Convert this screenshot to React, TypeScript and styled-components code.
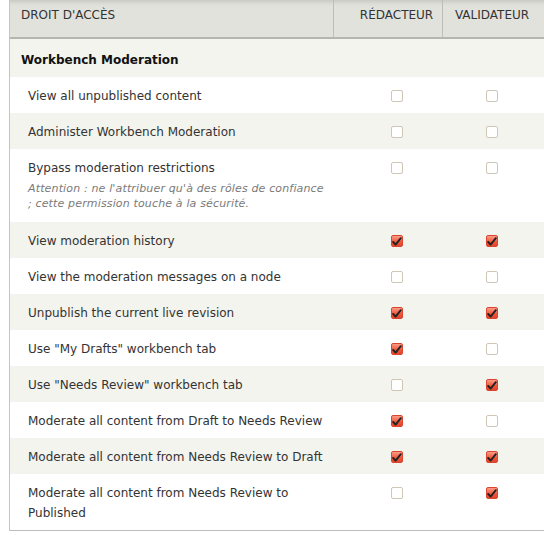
import React from "react";
import styled, { createGlobalStyle } from "styled-components";

const Global = createGlobalStyle`
  html, body { margin: 0; padding: 0; background: #fff; overflow: hidden; }
  body { font-family: "DejaVu Sans", "Liberation Sans", sans-serif; color: #333; }
`;

const Page = styled.div`
  padding-left: 9px;
`;

const Table = styled.div`
  border-left: 1px solid #c4c4c0;
  border-bottom: 1px solid #bdbdb9;
  width: 535px;
`;

const HeadRow = styled.div`
  display: grid;
  grid-template-columns: 323px 109px 1fr;
  height: 37px;
  background: linear-gradient(#c9cac4 0px, #dcddd7 4px, #e1e2dc 7px, #e1e2dc 100%);
  border-bottom: 2px solid #b5b6b0;
`;

const HeadCell = styled.div<{ $align?: "left" | "center"; $left?: number; $right?: number; $divider?: boolean }>`
  font-size: 12px;
  line-height: 20px;
  padding-top: 5px;
  text-transform: uppercase;
  color: #333;
  text-align: ${(p) => p.$align || "left"};
  padding-left: ${(p) => p.$left ?? 11}px;
  padding-right: ${(p) => p.$right ?? 0}px;
  border-left: ${(p) => (p.$divider ? "1px solid #bdbeb8" : "none")};
  white-space: nowrap;
`;

const Row = styled.div<{ $odd: boolean }>`
  display: grid;
  grid-template-columns: 323px 109px 1fr;
  background: ${(p) => (p.$odd ? "#f3f4ee" : "#fff")};
`;

const GroupCell = styled.div`
  grid-column: 1 / -1;
  font-size: 12px;
  font-weight: bold;
  line-height: 20px;
  color: #111;
  padding: 11px 11px 7px;
`;

const NameCell = styled.div`
  font-size: 12px;
  line-height: 20px;
  color: #333;
  padding: 9px 8px 7px 18px;
`;

const Desc = styled.div`
  font-size: 11px;
  font-style: italic;
  line-height: 15px;
  color: #7a7a7a;
  margin: 3px 0 4px;
  letter-spacing: 0.15px;
`;

const BoxCell = styled.div<{ $left: number; $right: number }>`
  display: flex;
  justify-content: center;
  padding-top: 13px;
  padding-left: ${(p) => p.$left}px;
  padding-right: ${(p) => p.$right}px;
`;

const Box = styled.span<{ $checked: boolean }>`
  box-sizing: border-box;
  width: 12px;
  height: 12px;
  border-radius: 2px;
  border: 1px solid ${(p) => (p.$checked ? "#d8462f" : "#cfc6b6")};
  background: ${(p) =>
    p.$checked ? "linear-gradient(#fb9a84, #ee553d 60%, #e4442c)" : "#fff"};
  display: flex;
  align-items: center;
  justify-content: center;
`;

const Check = () => (
  <svg width="10" height="9" viewBox="0 0 10 9">
    <path d="M1.2 5 L3.6 7.6 L8.8 1.2" stroke="#222" strokeWidth="1.9" fill="none" strokeLinecap="round" strokeLinejoin="round" />
  </svg>
);

type Perm = { name: string; desc?: string; r: boolean; v: boolean };

const perms: Perm[] = [
  { name: "View all unpublished content", r: false, v: false },
  { name: "Administer Workbench Moderation", r: false, v: false },
  {
    name: "Bypass moderation restrictions",
    desc: "Attention : ne l'attribuer qu'à des rôles de confiance ; cette permission touche à la sécurité.",
    r: false,
    v: false,
  },
  { name: "View moderation history", r: true, v: true },
  { name: "View the moderation messages on a node", r: false, v: false },
  { name: "Unpublish the current live revision", r: true, v: true },
  { name: 'Use "My Drafts" workbench tab', r: true, v: false },
  { name: 'Use "Needs Review" workbench tab', r: false, v: true },
  { name: "Moderate all content from Draft to Needs Review", r: true, v: false },
  { name: "Moderate all content from Needs Review to Draft", r: true, v: true },
  { name: "Moderate all content from Needs Review to Published", r: false, v: true },
];

const CheckBox = ({ checked }: { checked: boolean }) => (
  <Box $checked={checked}>{checked && <Check />}</Box>
);

export default function App() {
  return (
    <Page>
      <Global />
      <Table>
        <HeadRow>
          <HeadCell>Droit d'accès</HeadCell>
          <HeadCell $align="center" $left={17} $right={0} $divider>
            Rédacteur
          </HeadCell>
          <HeadCell $align="center" $left={0} $right={4} $divider>
            Validateur
          </HeadCell>
        </HeadRow>
        <Row $odd>
          <GroupCell>Workbench Moderation</GroupCell>
        </Row>
        {perms.map((p, i) => (
          <Row key={p.name} $odd={i % 2 === 1}>
            <NameCell>
              {p.name}
              {p.desc && <Desc>{p.desc}</Desc>}
            </NameCell>
            <BoxCell $left={18} $right={0}>
              <CheckBox checked={p.r} />
            </BoxCell>
            <BoxCell $left={0} $right={4}>
              <CheckBox checked={p.v} />
            </BoxCell>
          </Row>
        ))}
      </Table>
    </Page>
  );
}
